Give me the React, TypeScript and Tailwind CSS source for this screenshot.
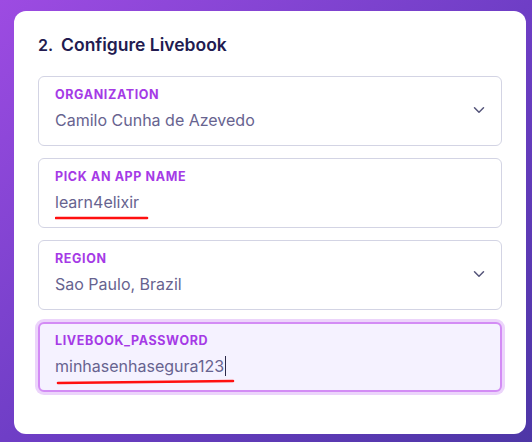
import { ChevronDown } from "lucide-react";

type FieldProps = {
  label: string;
  value: string;
  select?: boolean;
  focused?: boolean;
  underline?: number;
};

const Field = ({ label, value, select, focused, underline }: FieldProps) => {
  return (
    <div
      className={
        focused
          ? "relative flex h-[70px] items-center rounded-md border-2 border-[#d38cf5] bg-[#f5f2ff] pb-[3px] pl-[15px] pr-4 ring-[3px] ring-[#ecd4fb]"
          : "relative flex h-[70px] items-center rounded-md border border-[#d3d4e4] bg-white pb-[3px] pl-4 pr-[13px]"
      }
    >
      <div className="flex flex-1 flex-col">
        <span className="text-[12.5px] font-bold uppercase leading-4 tracking-[0.05em] text-[#a53ae6]">
          {label}
        </span>
        <div className="relative mt-[5px] flex items-center">
          <span className="text-[16px] leading-6 text-[#67638f]">{value}</span>
          {focused && <span className="ml-px h-[20px] w-px bg-[#2c2a4a]" />}
          {underline && (
            <svg
              className="absolute left-0 top-[25px]"
              width={underline + 6}
              height="6"
              viewBox={`0 0 ${underline + 6} 6`}
            >
              <path
                d={focused ? `M3 4 L${underline + 2} 2` : `M1 3 L${underline} 3`}
                stroke="#ff1010"
                strokeWidth="2.6"
                strokeLinecap="round"
                fill="none"
              />
            </svg>
          )}
        </div>
      </div>
      {select && (
        <ChevronDown className="mt-[1px] h-[18px] w-[18px] text-[#55557a]" strokeWidth={2} />
      )}
    </div>
  );
};

export default function App() {
  return (
    <div
      className="h-[442px] w-[532px] bg-gradient-to-br from-[#9d4be2] via-[#6f3ec6] to-[#4d36a6] pb-[8px] pl-[14px] pr-[6px] pt-[11px]"
      style={{ fontFamily: "Inter, 'Noto Sans', sans-serif" }}
    >
      <div className="h-full rounded-xl bg-white px-6 pt-[20px]">
        <h2 className="flex items-center text-[17.5px] font-semibold leading-7 text-[#221b50]">
          <span className="text-[16px]">2.</span>
          <span className="ml-[8px]">Configure Livebook</span>
        </h2>
        <div className="mt-[17px] flex flex-col gap-3">
          <Field label="Organization" value="Camilo Cunha de Azevedo" select />
          <Field label="Pick an app name" value="learn4elixir" underline={92} />
          <Field label="Region" value="Sao Paulo, Brazil" select />
          <Field label="LIVEBOOK_PASSWORD" value="minhasenhasegura123" focused underline={176} />
        </div>
      </div>
    </div>
  );
}
